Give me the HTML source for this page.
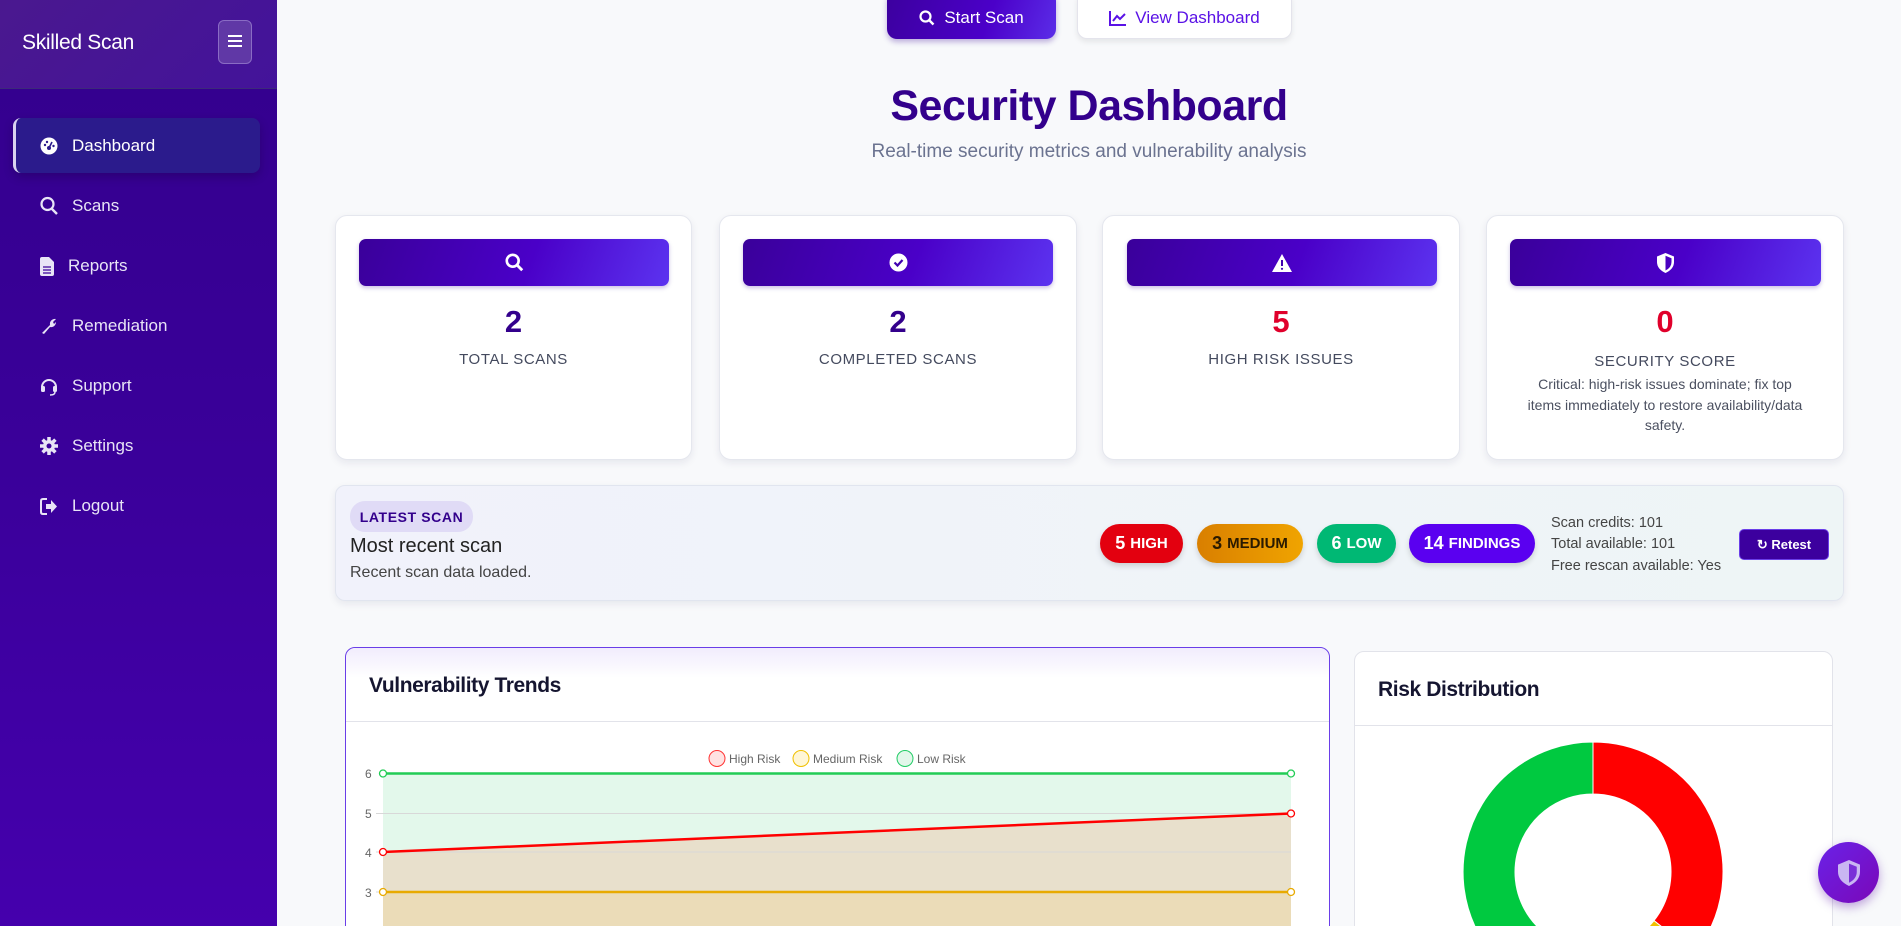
<!DOCTYPE html>
<html><head><meta charset="utf-8"><style>
*{box-sizing:border-box;margin:0;padding:0}
html,body{width:1901px;height:926px;overflow:hidden}
body{background:#f8f9fb;font-family:"Liberation Sans",Arial,sans-serif}
#w{position:relative;width:1901px;height:926px;overflow:hidden}
.a{position:absolute}
.side{left:0;top:0;width:277px;height:926px;background:linear-gradient(180deg,#33008c 0%,#3a009a 50%,#4500ad 100%)}
.sh{left:0;top:0;width:277px;height:89px;background:linear-gradient(135deg,#4a188f,#43139a);border-bottom:1px solid #3d2a7a}
.nav{left:40px;color:#e8e4f6;font-size:17px;display:flex;align-items:center;gap:14px}
.card{background:#fff;border:1px solid #e5e7ee;border-radius:12px;box-shadow:0 3px 8px rgba(30,30,80,.08)}
.ban{height:47px;border-radius:7px;background:linear-gradient(110deg,#3a009a 0%,#4a00c8 55%,#5c33f0 100%);display:flex;align-items:center;justify-content:center;box-shadow:0 2px 4px rgba(50,0,150,.25)}
.num{width:100%;text-align:center;font-size:31px;font-weight:bold;color:#33008c}
.lbl{width:100%;text-align:center;font-size:15px;color:#444a5e;letter-spacing:.6px}
.bdg{height:39px;border-radius:20px;color:#fff;font-weight:bold;display:flex;align-items:center;justify-content:center;font-size:15px;gap:5px;box-shadow:0 3px 6px rgba(0,0,0,.15)}
.bdg b{font-size:18px}
</style></head><body><div id="w">
<div class="a side"></div>
<div class="a sh"></div>
<div class="a" style="left:22px;top:31px;color:#fff;font-size:21px;letter-spacing:-.3px">Skilled Scan</div>
<div class="a" style="left:218px;top:20px;width:34px;height:44px;border-radius:6px;background:#6038a6;border:1px solid #8a6cc4"></div>
<div class="a" style="left:228px;top:35px;width:14px;height:2px;background:#fff;box-shadow:0 5px 0 #fff,0 10px 0 #fff"></div>
<div class="a" style="left:13px;top:118px;width:247px;height:55px;border-radius:8px;background:#2b1b8c;border-left:3px solid #d9d4f0;box-shadow:0 4px 10px rgba(0,0,0,.2)"></div>
<div class="a nav" style="top:136px"><svg width="18" height="18" viewBox="0 0 18 18"><circle cx="9" cy="9" r="8.5" fill="#fff"/><circle cx="9" cy="11" r="2" fill="#2b1b8c"/><path d="M9 11L12 5" stroke="#2b1b8c" stroke-width="1.6"/><circle cx="5" cy="8" r="1.2" fill="#2b1b8c"/><circle cx="7" cy="5" r="1.2" fill="#2b1b8c"/><circle cx="13.5" cy="9" r="1.2" fill="#2b1b8c"/></svg><span style="color:#fff">Dashboard</span></div>
<div class="a nav" style="top:196px"><svg width="18" height="20" viewBox="0 0 18 20"><circle cx="7.5" cy="8" r="6" fill="none" stroke="#e8e4f6" stroke-width="2.2"/><path d="M12 13l5 5" stroke="#e8e4f6" stroke-width="2.4"/></svg>Scans</div>
<div class="a nav" style="top:256px"><svg width="14" height="19" viewBox="0 0 14 19"><path d="M0 2Q0 0 2 0H9L14 5V17Q14 19 12 19H2Q0 19 0 17Z" fill="#e8e4f6"/><path d="M3 10H11M3 13H11M3 16H11" stroke="#3a009a" stroke-width="1.3"/></svg>Reports</div>
<div class="a nav" style="top:316px"><svg width="18" height="18" viewBox="0 0 18 18"><path d="M2 16L10 8A5 5 0 0 1 16 2L13 5L14 7L16 5A5 5 0 0 1 10 10L4 17Z" fill="#e8e4f6"/></svg>Remediation</div>
<div class="a nav" style="top:376px"><svg width="18" height="19" viewBox="0 0 18 19"><path d="M2 10A7 7 0 0 1 16 10" fill="none" stroke="#e8e4f6" stroke-width="2"/><rect x="1" y="9" width="4" height="6" rx="1.5" fill="#e8e4f6"/><rect x="13" y="9" width="4" height="6" rx="1.5" fill="#e8e4f6"/><path d="M15 15Q15 18 10 18" fill="none" stroke="#e8e4f6" stroke-width="1.5"/></svg>Support</div>
<div class="a nav" style="top:436px"><svg width="18" height="18" viewBox="0 0 18 18"><circle cx="9" cy="9" r="6" fill="#e8e4f6"/><g stroke="#e8e4f6" stroke-width="3.5"><path d="M9 0V18M0 9H18M2.6 2.6L15.4 15.4M15.4 2.6L2.6 15.4"/></g><circle cx="9" cy="9" r="2.5" fill="#3a009a"/></svg>Settings</div>
<div class="a nav" style="top:496px"><svg width="18" height="17" viewBox="0 0 18 17"><path d="M7 1H3Q1 1 1 3V14Q1 16 3 16H7" fill="none" stroke="#e8e4f6" stroke-width="2"/><path d="M6 6H11V2L17 8.5L11 15V11H6Z" fill="#e8e4f6"/></svg>Logout</div>

<div class="a" style="left:887px;top:-9px;width:169px;height:48px;border-radius:10px;background:linear-gradient(110deg,#3c009e,#4b00c9 60%,#5b2de8);color:#fff;font-size:17px;display:flex;align-items:center;justify-content:center;gap:9px;padding-top:6px;box-shadow:0 3px 6px rgba(50,0,150,.3)"><svg width="16" height="16" viewBox="0 0 16 16"><circle cx="6.5" cy="6.5" r="5" fill="none" stroke="#fff" stroke-width="2.2"/><path d="M10 10l4.5 4.5" stroke="#fff" stroke-width="2.4"/></svg>Start Scan</div>
<div class="a" style="left:1077px;top:-9px;width:215px;height:48px;border-radius:10px;background:#fff;border:1px solid #e4e4ec;color:#5a12e6;font-size:17px;display:flex;align-items:center;justify-content:center;gap:9px;padding-top:6px;box-shadow:0 3px 6px rgba(0,0,0,.08)"><svg width="17" height="15" viewBox="0 0 17 15"><path d="M1 0V14H17" fill="none" stroke="#5a12e6" stroke-width="2"/><path d="M4 10L8 5L11 8L16 3" fill="none" stroke="#5a12e6" stroke-width="2"/></svg>View Dashboard</div>
<div class="a" style="left:277px;width:1624px;top:82px;text-align:center;font-size:43px;font-weight:bold;color:#33008c;letter-spacing:-.5px">Security Dashboard</div>
<div class="a" style="left:277px;width:1624px;top:141px;text-align:center;font-size:19px;color:#6b7390">Real-time security metrics and vulnerability analysis</div>

<div class="a card" style="left:335px;top:215px;width:357px;height:245px"></div>
<div class="a card" style="left:719px;top:215px;width:358px;height:245px"></div>
<div class="a card" style="left:1102px;top:215px;width:358px;height:245px"></div>
<div class="a card" style="left:1486px;top:215px;width:358px;height:245px"></div>
<div class="a ban" style="left:359px;top:239px;width:310px"><svg width="19" height="19" viewBox="0 0 16 16"><circle cx="6.5" cy="6.5" r="5" fill="none" stroke="#fff" stroke-width="2.2"/><path d="M10 10l4.5 4.5" stroke="#fff" stroke-width="2.4"/></svg></div>
<div class="a ban" style="left:743px;top:239px;width:310px"><svg width="19" height="19" viewBox="0 0 19 19"><circle cx="9.5" cy="9.5" r="9" fill="#fff"/><path d="M5.5 9.5L8.5 12.5L13.5 7" fill="none" stroke="#4000b0" stroke-width="2.2"/></svg></div>
<div class="a ban" style="left:1127px;top:239px;width:310px"><svg width="20" height="18" viewBox="0 0 20 18"><path d="M10 0L20 18H0Z" fill="#fff"/><path d="M10 6V12" stroke="#4000b0" stroke-width="2"/><circle cx="10" cy="14.8" r="1.1" fill="#4000b0"/></svg></div>
<div class="a ban" style="left:1510px;top:239px;width:311px"><svg width="17" height="20" viewBox="0 0 17 20"><path d="M8.5 0L17 3.5V9Q17 16 8.5 20Q0 16 0 9V3.5Z" fill="#fff"/><path d="M8.5 2.8L14.5 5.2V9Q14.5 14.5 8.5 17.5Z" fill="#4a00c0"/></svg></div>
<div class="a num" style="left:335px;width:357px;top:304px">2</div>
<div class="a num" style="left:719px;width:358px;top:304px">2</div>
<div class="a num" style="left:1102px;width:358px;top:304px;color:#e0002b">5</div>
<div class="a num" style="left:1486px;width:358px;top:304px;color:#e0002b">0</div>
<div class="a lbl" style="left:335px;width:357px;top:351px">TOTAL SCANS</div>
<div class="a lbl" style="left:719px;width:358px;top:351px">COMPLETED SCANS</div>
<div class="a lbl" style="left:1102px;width:358px;top:351px">HIGH RISK ISSUES</div>
<div class="a lbl" style="left:1486px;width:358px;top:353px">SECURITY SCORE</div>
<div class="a" style="left:1525px;width:280px;top:374px;text-align:center;font-size:14px;line-height:20.5px;color:#4b5060">Critical: high-risk issues dominate; fix top items immediately to restore availability/data safety.</div>

<div class="a" style="left:335px;top:485px;width:1509px;height:116px;border-radius:10px;background:linear-gradient(90deg,#f1f2fb,#eef5f6);border:1px solid #e1e5ef;box-shadow:0 3px 8px rgba(30,30,80,.08)"></div>
<div class="a" style="left:350px;top:501px;width:123px;height:31px;border-radius:15px;background:#e0dbf6;color:#33008c;font-size:14px;font-weight:bold;letter-spacing:.6px;display:flex;align-items:center;justify-content:center">LATEST SCAN</div>
<div class="a" style="left:350px;top:535px;font-size:20px;color:#222">Most recent scan</div>
<div class="a" style="left:350px;top:564px;font-size:16px;color:#444">Recent scan data loaded.</div>
<div class="a bdg" style="left:1100px;top:524px;width:83px;background:#e3000f"><b>5</b>HIGH</div>
<div class="a bdg" style="left:1197px;top:524px;width:106px;background:linear-gradient(90deg,#d97f00,#f0a400);color:#2a1a00"><b>3</b>MEDIUM</div>
<div class="a bdg" style="left:1317px;top:524px;width:79px;background:#00b874"><b>6</b>LOW</div>
<div class="a bdg" style="left:1409px;top:524px;width:126px;background:#5a00f0"><b>14</b>FINDINGS</div>
<div class="a" style="left:1551px;top:513px;font-size:14.5px;line-height:21.3px;color:#444">Scan credits: 101<br>Total available: 101<br>Free rescan available: Yes</div>
<div class="a" style="left:1739px;top:529px;width:90px;height:31px;border-radius:5px;background:#3c009e;border:1px solid #6a3ee8;color:#fff;font-size:13px;font-weight:bold;display:flex;align-items:center;justify-content:center;gap:6px">↻ Retest</div>

<div class="a" style="left:345px;top:647px;width:985px;height:320px;background:#fff;border:1px solid #6a3ee8;border-radius:10px"></div>
<div class="a" style="left:346px;top:648px;width:983px;height:30px;background:linear-gradient(180deg,#f1ecfd,#fff);border-radius:10px 10px 0 0"></div>
<div class="a" style="left:346px;top:721px;width:983px;height:1px;background:#e2e3ea"></div>
<div class="a" style="left:369px;top:674px;font-size:21px;font-weight:bold;color:#151530;letter-spacing:-.4px">Vulnerability Trends</div>
<svg class="a" style="left:346px;top:740px" width="983" height="190">
<g font-family="Liberation Sans" font-size="12" fill="#666">
<circle cx="371" cy="18.5" r="8" fill="#ffe2e2" stroke="#ff3333"/><text x="383" y="23">High Risk</text>
<circle cx="455" cy="18.5" r="8" fill="#fff6d6" stroke="#f0c000"/><text x="467" y="23">Medium Risk</text>
<circle cx="559" cy="18.5" r="8" fill="#e2f7ea" stroke="#22cc66"/><text x="571" y="23">Low Risk</text>
<text x="19" y="38">6</text><text x="19" y="78">5</text><text x="19" y="117">4</text><text x="19" y="157">3</text>
</g>
<rect x="37" y="33.5" width="908" height="160" fill="#e3f8eb"/>
<path d="M37 112L945 73.5V190H37Z" fill="#e8e0cc"/>
<rect x="37" y="152" width="908" height="40" fill="#ebdcb8"/>
<g stroke="#d8d8d8" stroke-width="1"><path d="M30 73.5H945M30 112H945M30 152H945"/></g>
<path d="M37 33.5H945" stroke="#22cc55" stroke-width="2.5"/>
<path d="M37 112L945 73.5" stroke="#ff0000" stroke-width="2.5"/>
<path d="M37 152H945" stroke="#e8aa00" stroke-width="2.5"/>
<g fill="#fff" stroke-width="1.3"><circle cx="37" cy="33.5" r="3.5" stroke="#22cc55"/><circle cx="945" cy="33.5" r="3.5" stroke="#22cc55"/><circle cx="37" cy="112" r="3.5" stroke="#f00"/><circle cx="945" cy="73.5" r="3.5" stroke="#f00"/><circle cx="37" cy="152" r="3.5" stroke="#e8aa00"/><circle cx="945" cy="152" r="3.5" stroke="#e8aa00"/></g>
</svg>

<div class="a" style="left:1354px;top:651px;width:479px;height:320px;background:#fff;border:1px solid #e2e3ea;border-radius:10px"></div>
<div class="a" style="left:1355px;top:725px;width:477px;height:1px;background:#e2e3ea"></div>
<div class="a" style="left:1378px;top:678px;font-size:21px;font-weight:bold;color:#151530;letter-spacing:-.4px">Risk Distribution</div>
<svg class="a" style="left:1463px;top:742px" width="260" height="260" viewBox="-130 -130 260 260">
<path d="M0 -130A130 130 0 0 1 101.6 81.1L61 48.6A78 78 0 0 0 0 -78Z" fill="#ff0000" stroke="#fff"/>
<path d="M101.6 81.1A130 130 0 0 1 -56.4 117.1L-33.8 70.3A78 78 0 0 0 61 48.6Z" fill="#f0c000" stroke="#fff"/>
<path d="M-56.4 117.1A130 130 0 0 1 0 -130L0 -78A78 78 0 0 0 -33.8 70.3Z" fill="#00c940" stroke="#fff"/>
</svg>
<div class="a" style="left:1818px;top:842px;width:61px;height:61px;border-radius:50%;background:linear-gradient(135deg,#6a22e8,#7a08b8);box-shadow:0 4px 10px rgba(80,0,160,.35);display:flex;align-items:center;justify-content:center"><svg width="22" height="26" viewBox="0 0 17 20"><path d="M8.5 0L17 3.5V9Q17 16 8.5 20Q0 16 0 9V3.5Z" fill="#c9b6f2"/><path d="M8.5 2.8L14.5 5.2V9Q14.5 14.5 8.5 17.5Z" fill="#7a30d8"/></svg></div>
</div></body></html>
